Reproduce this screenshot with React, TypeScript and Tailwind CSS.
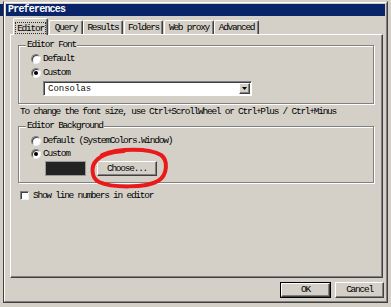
import React from "react";

const T =
  "font-['Liberation_Mono',monospace] text-[9.5px] leading-[10px] tracking-[-1.25px] text-black whitespace-nowrap";
const RAISED =
  "bg-[#d4d0c8] border border-t-white border-l-white border-r-[#404040] border-b-[#404040] shadow-[inset_-1px_-1px_0_#808080]";

function Radio({ checked }: { checked?: boolean }) {
  return (
    <div className="w-[10px] h-[10px] rounded-full bg-white border border-t-[#808080] border-l-[#808080] border-r-[#f0f0f0] border-b-[#f0f0f0] shadow-[inset_1px_1px_0_#404040] flex items-center justify-center shrink-0">
      {checked && <div className="w-[4px] h-[4px] rounded-full bg-black" />}
    </div>
  );
}

function Tab({ label, w, ml, selected }: { label: string; w: string; ml: string; selected?: boolean }) {
  if (selected) {
    return (
      <div
        className={`${w} ${ml} h-[17px] -mb-[1px] relative z-10 bg-[#d4d0c8] border-t border-l border-r border-t-white border-l-white border-r-[#404040] shadow-[inset_-1px_0_0_#808080] rounded-t-[2px] flex justify-center pt-[3px]`}
      >
        <span className={`${T} border border-dotted border-[#333] h-[12px] px-[1px] pt-[1px]`}>{label}</span>
      </div>
    );
  }
  return (
    <div
      className={`${w} ${ml} h-[14px] bg-[#d4d0c8] border-t border-l border-r border-t-white border-l-white border-r-[#404040] shadow-[inset_-1px_0_0_#808080] rounded-t-[2px] flex justify-center pt-[2px]`}
    >
      <span className={T}>{label}</span>
    </div>
  );
}

function GroupLabel({ text }: { text: string }) {
  return <div className={`${T} -mt-[6px] ml-[7px] px-[1px] bg-[#d4d0c8] self-start`}>{text}</div>;
}

export default function App() {
  return (
    <div className="w-[391px] h-[307px] bg-[#d4d0c8] flex pt-[1px] overflow-hidden">
      <div className="w-[3px] flex flex-col shrink-0">
        <div className="h-[3px]" />
        <div className="h-[12px] bg-[#0a246a]" />
      </div>
      <div className="w-[385px] h-[302px] shrink-0 border border-l-[#404040] border-t-[#d4d0c8] border-r-[#404040] border-b-[#404040] flex flex-col">
        <div className="flex-1 border border-t-white border-l-white border-r-[#808080] border-b-[#808080] p-[1px] flex flex-col">
          {/* Title bar */}
          <div className="h-[12px] bg-[#0a246a] pl-[2px] flex items-center">
            <span className="font-['Liberation_Mono',monospace] font-bold text-[10px] leading-[12px] tracking-[-0.8px] text-white">
              Preferences
            </span>
          </div>

          {/* Tabs */}
          <div className="mt-[2px] h-[16px] flex items-end pl-[7px]">
            <Tab label="Editor" w="w-[35px]" ml="ml-0" selected />
            <Tab label="Query" w="w-[34px]" ml="ml-[1px]" />
            <Tab label="Results" w="w-[40px]" ml="ml-0" />
            <Tab label="Folders" w="w-[39px]" ml="ml-[1px]" />
            <Tab label="Web proxy" w="w-[50px]" ml="ml-[1px]" />
            <Tab label="Advanced" w="w-[45px]" ml="ml-0" />
          </div>

          {/* Panel */}
          <div className="ml-[4px] w-[373px] h-[244px] border border-t-white border-l-white border-r-[#404040] border-b-[#404040] shadow-[inset_-1px_-1px_0_#808080] flex flex-col pl-[7px] pt-[10px]">
            {/* Editor Font group */}
            <div className="w-[356px] h-[59px] border border-[#808080] shadow-[inset_1px_1px_0_#fff,1px_1px_0_#fff] flex flex-col">
              <GroupLabel text="Editor Font" />
              <div className="mt-[4px] h-[10px] flex items-center pl-[12px] gap-[2px]">
                <Radio />
                <span className={T}>Default</span>
              </div>
              <div className="mt-[4px] h-[10px] flex items-center pl-[12px] gap-[2px]">
                <Radio checked />
                <span className={T}>Custom</span>
              </div>
              <div className="mt-[3px] ml-[24px] w-[209px] h-[15px] bg-white border border-t-[#808080] border-l-[#808080] border-r-white border-b-white shadow-[inset_1px_1px_0_#404040] flex items-center justify-between pl-[4px] pr-[1px]">
                <span className="font-['Liberation_Mono',monospace] text-[9px] leading-[10px] text-[#111]">Consolas</span>
                <div className={`${RAISED} w-[11px] h-[11px] flex items-center justify-center`}>
                  <svg width="5" height="3" viewBox="0 0 5 3">
                    <path d="M0 0H5L2.5 3Z" fill="#000" />
                  </svg>
                </div>
              </div>
            </div>

            <div className={`${T} mt-[3px] ml-[2px]`}>
              To change the font size, use Ctrl+ScrollWheel or Ctrl+Plus / Ctrl+Minus
            </div>

            {/* Editor Background group */}
            <div className="mt-[9px] w-[356px] h-[57px] border border-[#808080] shadow-[inset_1px_1px_0_#fff,1px_1px_0_#fff] flex flex-col">
              <GroupLabel text="Editor Background" />
              <div className="mt-[5px] h-[10px] flex items-center pl-[12px] gap-[2px]">
                <Radio />
                <span className={T}>Default (SystemColors.Window)</span>
              </div>
              <div className="mt-[3px] h-[10px] flex items-center pl-[12px] gap-[2px]">
                <Radio checked />
                <span className={T}>Custom</span>
              </div>
              <div className="mt-[2px] h-[15px] flex items-stretch">
                <div className="ml-[26px] w-[41px] bg-[#232323] border border-[#9a9a9a]" />
                <div className="ml-[11px] w-[60px] relative">
                  <div className={`${RAISED} w-full h-full flex items-center justify-center`}>
                    <span className={T}>Choose...</span>
                  </div>
                  <svg
                    className="absolute left-[-9px] top-[-14px] pointer-events-none overflow-visible"
                    width="80"
                    height="42"
                    viewBox="0 0 80 42"
                  >
                    <path
                      d="M14 8 C30 1, 62 1, 73 8 C80 13, 80 28, 70 34 C58 41, 24 41, 11 35 C3 31, 3 19, 8 14 C12 9, 22 5, 36 4"
                      fill="none"
                      stroke="#ea1a1a"
                      strokeWidth="4"
                      strokeLinecap="round"
                    />
                  </svg>
                </div>
              </div>
            </div>

            <div className="mt-[8px] ml-[2px] h-[9px] flex items-center gap-[4px]">
              <div className="w-[9px] h-[9px] bg-white border border-t-[#808080] border-l-[#808080] border-r-[#f0f0f0] border-b-[#f0f0f0] shadow-[inset_1px_1px_0_#404040]" />
              <span className={T}>Show line numbers in editor</span>
            </div>
          </div>

          {/* Buttons */}
          <div className="mt-[4px] flex justify-end gap-[4px] pr-[1px]">
            <div className="w-[51px] h-[16px] border border-black">
              <div className={`${RAISED} w-full h-full flex items-center justify-center`}>
                <span className={T}>OK</span>
              </div>
            </div>
            <div className={`${RAISED} w-[49px] h-[16px] flex items-center justify-center`}>
              <span className={T}>Cancel</span>
            </div>
          </div>
        </div>
      </div>
    </div>
  );
}
